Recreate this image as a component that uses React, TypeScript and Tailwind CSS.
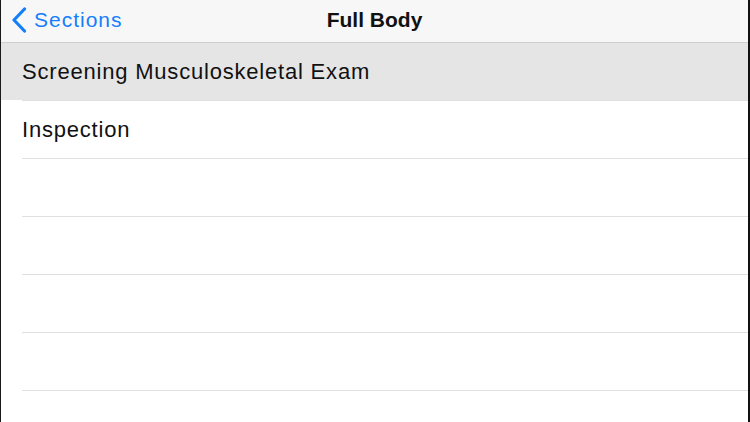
export default function App() {
  const rows = ["Inspection", "", "", "", "", ""];
  return (
    <div
      className="flex h-[422px] w-[750px] flex-col overflow-hidden border-l border-r-2 border-l-[#1a1a1a] border-r-[#111] bg-white"
      style={{ fontFamily: '"Liberation Sans", Arial, sans-serif' }}
    >
      <div className="relative flex h-[43px] shrink-0 items-center justify-center border-b border-[#cfcfcf] bg-[#f7f7f7] pb-[3px]">
        <div className="absolute left-[10px] top-0 flex h-[39px] items-center gap-[7px] text-[#157efb]">
          <svg width="16" height="26" viewBox="0 0 16 26" fill="none">
            <path d="M13.5 2 L3 13 L13.5 24" stroke="#157efb" strokeWidth="3.2" strokeLinecap="round" strokeLinejoin="round" />
          </svg>
          <span className="text-[21px] leading-none tracking-[1px]">Sections</span>
        </div>
        <span className="text-[21px] font-bold leading-none text-[#111]">Full Body</span>
      </div>
      <div className="flex h-[57px] shrink-0 items-center bg-[#e5e5e5] pl-[21px] text-[22px] tracking-[0.8px] text-[#111]">
        Screening Musculoskeletal Exam
      </div>
      {rows.map((r, i) => (
        <div key={i} className="h-[58px] shrink-0 pl-[21px]">
          <div className="flex h-full items-center border-t border-[#e0e0e0] text-[22px] tracking-[0.8px] text-[#111]">
            {r}
          </div>
        </div>
      ))}
    </div>
  );
}
